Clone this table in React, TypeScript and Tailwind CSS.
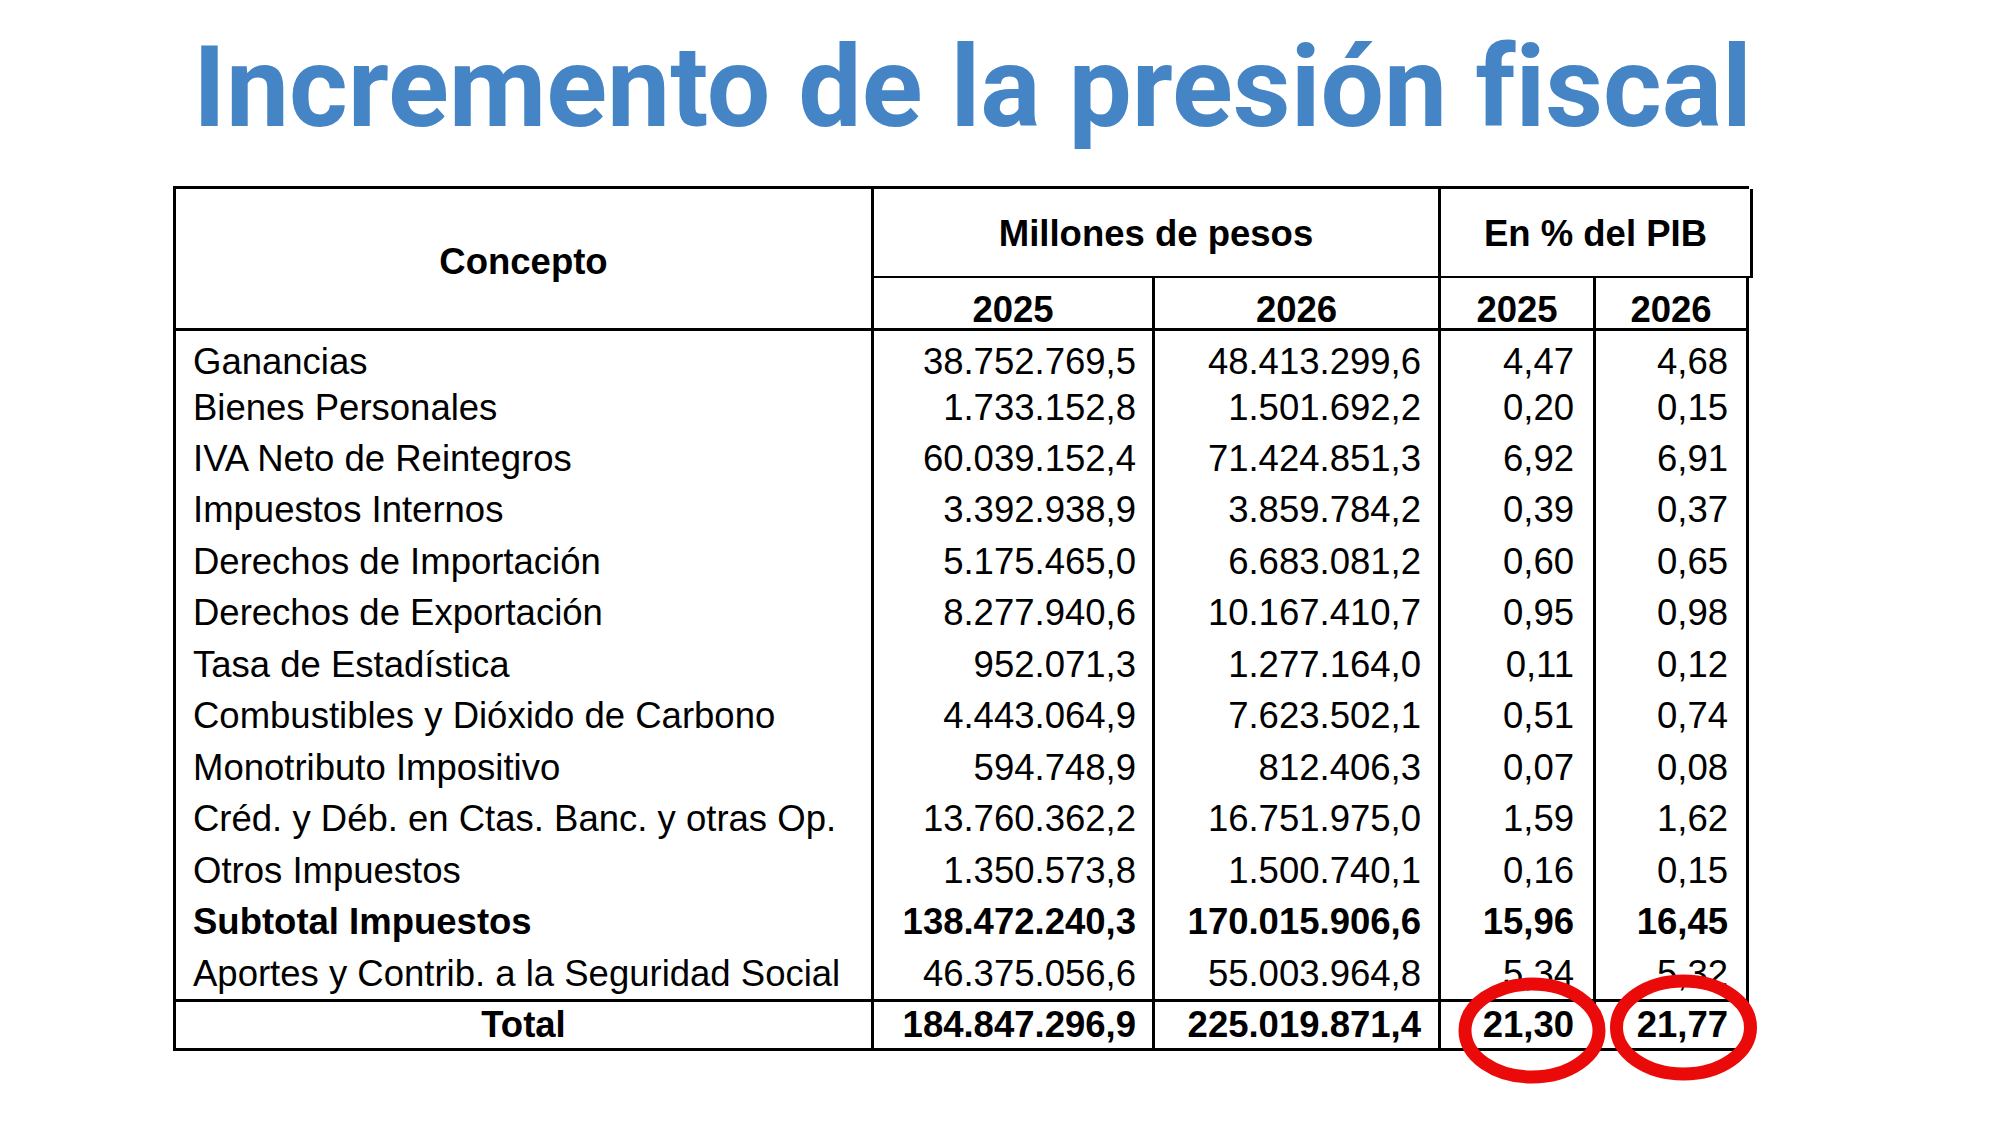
import React from "react";

type Row = { label: string; m25: string; m26: string; p25: string; p26: string; bold?: boolean };

const rows: Row[] = [
  { label: "Ganancias", m25: "38.752.769,5", m26: "48.413.299,6", p25: "4,47", p26: "4,68" },
  { label: "Bienes Personales", m25: "1.733.152,8", m26: "1.501.692,2", p25: "0,20", p26: "0,15" },
  { label: "IVA Neto de Reintegros", m25: "60.039.152,4", m26: "71.424.851,3", p25: "6,92", p26: "6,91" },
  { label: "Impuestos Internos", m25: "3.392.938,9", m26: "3.859.784,2", p25: "0,39", p26: "0,37" },
  { label: "Derechos de Importación", m25: "5.175.465,0", m26: "6.683.081,2", p25: "0,60", p26: "0,65" },
  { label: "Derechos de Exportación", m25: "8.277.940,6", m26: "10.167.410,7", p25: "0,95", p26: "0,98" },
  { label: "Tasa de Estadística", m25: "952.071,3", m26: "1.277.164,0", p25: "0,11", p26: "0,12" },
  { label: "Combustibles y Dióxido de Carbono", m25: "4.443.064,9", m26: "7.623.502,1", p25: "0,51", p26: "0,74" },
  { label: "Monotributo Impositivo", m25: "594.748,9", m26: "812.406,3", p25: "0,07", p26: "0,08" },
  { label: "Créd. y Déb. en Ctas. Banc. y otras Op.", m25: "13.760.362,2", m26: "16.751.975,0", p25: "1,59", p26: "1,62" },
  { label: "Otros Impuestos", m25: "1.350.573,8", m26: "1.500.740,1", p25: "0,16", p26: "0,15" },
  { label: "Subtotal Impuestos", m25: "138.472.240,3", m26: "170.015.906,6", p25: "15,96", p26: "16,45", bold: true },
  { label: "Aportes y Contrib. a la Seguridad Social", m25: "46.375.056,6", m26: "55.003.964,8", p25: "5,34", p26: "5,32" },
];

const cols = "grid grid-cols-[698px_281px_286px_155px_156px]";

export default function App() {
  return (
    <div className="relative w-[2000px] h-[1125px] bg-white overflow-hidden">
      {/* título */}
      <h1 className="pl-[193px] pt-[32px] text-[112.6px] leading-none font-bold text-[#4685c5] [font-variant-ligatures:none] font-['Roboto','Noto_Sans',sans-serif]">
        Incremento de la presión fiscal
      </h1>

      {/* tabla */}
      <div className="ml-[173px] mt-[41px] w-[1576px] text-[36.5px] leading-none text-black font-['Liberation_Sans',Arial,sans-serif]">
        {/* encabezado */}
        <div className={`${cols} grid-rows-[89px_50px] border-t-[3px] border-b-[3px] border-black font-bold`}>
          <div className="row-span-2 border-l-[3px] border-black flex items-center justify-center pt-[8px]">Concepto</div>
          <div className="col-span-2 border-l-[3px] border-b-[2px] border-black flex items-center justify-center pt-[5px]">
            Millones de pesos
          </div>
          <div className="col-span-2 mr-[-4px] border-l-[3px] border-r-[3px] border-b-[2px] border-black flex items-center justify-center pt-[5px]">
            En % del PIB
          </div>
          <div className="border-l-[3px] border-black flex items-center justify-center pt-[16px]">2025</div>
          <div className="border-l-[3px] border-black flex items-center justify-center pt-[16px]">2026</div>
          <div className="border-l-[3px] border-black flex items-center justify-center pt-[16px]">2025</div>
          <div className="border-l-[3px] border-r-[3px] border-black flex items-center justify-center pt-[16px]">2026</div>
        </div>

        {/* filas */}
        {rows.map((r, i) => {
          const pad = i === 0 ? "pt-[12px]" : "";
          return (
            <div key={r.label} className={`${cols} h-[51.46px] ${r.bold ? "font-bold" : ""}`}>
              <div className={`border-l-[3px] border-black flex items-center pl-[17px] whitespace-nowrap ${pad}`}>{r.label}</div>
              <div className={`border-l-[3px] border-black flex items-center justify-end pr-[16px] ${pad}`}>{r.m25}</div>
              <div className={`border-l-[3px] border-black flex items-center justify-end pr-[17px] ${pad}`}>{r.m26}</div>
              <div className={`border-l-[3px] border-black flex items-center justify-end pr-[19px] ${pad}`}>{r.p25}</div>
              <div className={`border-l-[3px] border-r-[3px] border-black flex items-center justify-end pr-[18px] ${pad}`}>{r.p26}</div>
            </div>
          );
        })}

        {/* total */}
        <div className={`${cols} h-[52px] border-t-[3px] border-b-[3px] border-black font-bold`}>
          <div className="border-l-[3px] border-black flex items-center justify-center">Total</div>
          <div className="border-l-[3px] border-black flex items-center justify-end pr-[16px]">184.847.296,9</div>
          <div className="border-l-[3px] border-black flex items-center justify-end pr-[17px]">225.019.871,4</div>
          <div className="border-l-[3px] border-black flex items-center justify-end pr-[19px]">21,30</div>
          <div className="border-l-[3px] border-r-[3px] border-black flex items-center justify-end pr-[18px]">21,77</div>
        </div>
      </div>

      {/* círculos rojos */}
      <svg className="absolute inset-0 pointer-events-none" width="2000" height="1125" viewBox="0 0 2000 1125">
        <ellipse cx="1532" cy="1030.5" rx="67" ry="46.5" fill="none" stroke="#ea0a0a" strokeWidth="13" />
        <ellipse cx="1683.5" cy="1027.5" rx="67" ry="46.5" fill="none" stroke="#ea0a0a" strokeWidth="13" />
      </svg>
    </div>
  );
}
